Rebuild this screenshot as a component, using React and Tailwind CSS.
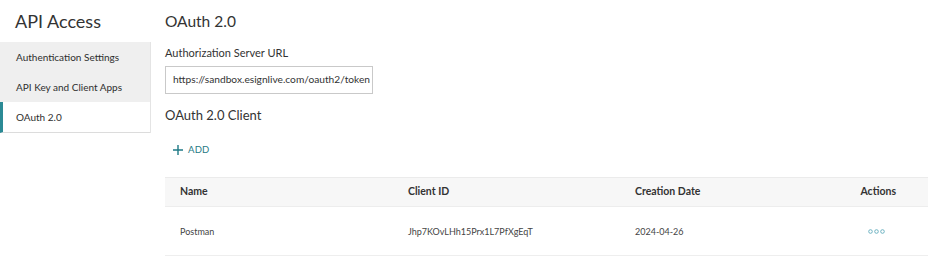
import React from 'react'

const navItems = ['Authentication Settings', 'API Key and Client Apps', 'OAuth 2.0']

function Sidebar() {
  return (
    <aside className="w-[151px] shrink-0">
      <h1 className="pl-[15px] pt-[9px] pb-[8px] text-[18px] leading-[25px] text-[#333]">API Access</h1>
      <nav className="bg-[#efefef] border-r border-[#e4e4e4]">
        {navItems.map((item) => {
          const active = item === 'OAuth 2.0'
          return (
            <div
              key={item}
              className={
                active
                  ? 'h-[31px] flex items-center pl-[13px] text-[10px] text-[#2e2e2e] bg-white border-l-[3px] border-[#2b8a95] border-b border-b-[#dcdcdc]'
                  : 'h-[30px] flex items-center pl-[16px] pt-[1px] text-[10px] text-[#2e2e2e]'
              }
            >
              {item}
            </div>
          )
        })}
      </nav>
    </aside>
  )
}

function Dots() {
  return (
    <svg width="17" height="5" viewBox="0 0 17 5" fill="none" stroke="#6fb3c2" strokeWidth="1">
      <circle cx="2.5" cy="2.5" r="1.8" />
      <circle cx="8.5" cy="2.5" r="1.8" />
      <circle cx="14.5" cy="2.5" r="1.8" />
    </svg>
  )
}

export default function App() {
  return (
    <div className="w-[936px] h-[266px] bg-white flex font-['Lato','Noto_Sans',sans-serif] overflow-hidden">
      <Sidebar />
      <main className="flex-1 pl-[14px] pr-[8px]">
        <h2 className="pt-[10px] text-[15.5px] leading-[22px] text-[#333]">OAuth 2.0</h2>
        <label className="block mt-[14px] text-[11px] leading-[14px] text-[#333]">Authorization Server URL</label>
        <div className="mt-[6px] w-[208px] h-[28px] border border-[#c9c9c9] flex items-center pl-[7px] text-[10.2px] text-[#333]">
          https://sandbox.esignlive.com/oauth2/token
        </div>
        <h3 className="mt-[12px] text-[13px] leading-[18px] text-[#333]">OAuth 2.0 Client</h3>
        <button className="mt-[19px] pl-[8px] flex items-center gap-[5px] text-[9.5px] text-[#1f7a86] tracking-[0.2px]">
          <svg width="10" height="10" viewBox="0 0 10 10" stroke="#1f7a86" strokeWidth="1.4">
            <path d="M5 0v10M0 5h10" />
          </svg>
          ADD
        </button>
        <div className="mt-[20px] w-[763px]">
          <div className="grid grid-cols-[228px_227px_1fr_auto] h-[30px] items-center bg-[#f7f7f7] border-t border-[#ebebeb] border-b border-b-[#ededed] text-[10.5px] font-bold text-[#333]">
            <div className="pl-[15px]">Name</div>
            <div className="pl-[15px]">Client ID</div>
            <div className="pl-[15px]">Creation Date</div>
            <div className="pr-[32px]">Actions</div>
          </div>
          <div className="grid grid-cols-[228px_227px_1fr_auto] h-[49px] items-center border-b border-[#eeeeee] text-[9px] text-[#444]">
            <div className="pl-[15px]">Postman</div>
            <div className="pl-[15px]">Jhp7KOvLHh15Prx1L7PfXgEqT</div>
            <div className="pl-[15px]">2024-04-26</div>
            <div className="pr-[43px] flex items-center"><Dots /></div>
          </div>
        </div>
      </main>
    </div>
  )
}
